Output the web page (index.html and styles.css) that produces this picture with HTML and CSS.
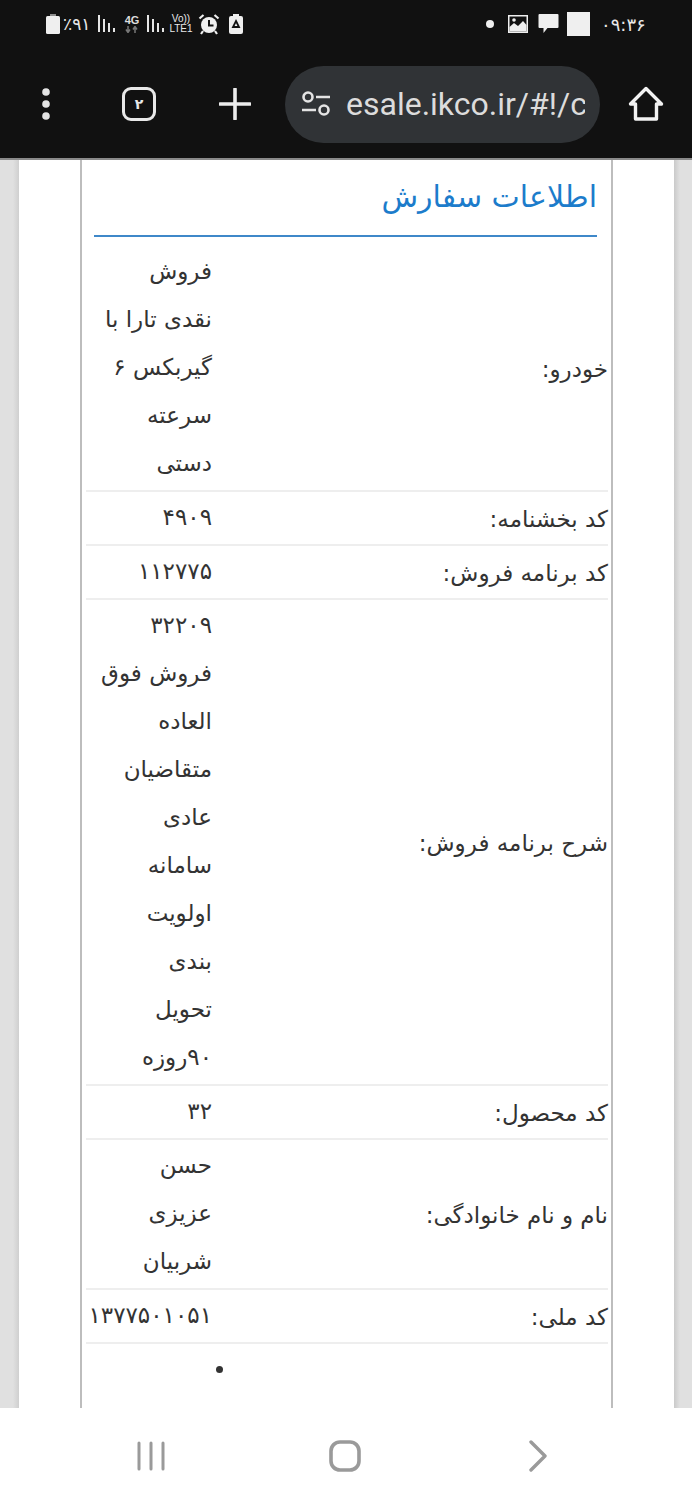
FILE: index.html
```html
<!DOCTYPE html>
<html lang="fa">
<head>
<meta charset="utf-8">
<title>اطلاعات سفارش</title>
<link rel="stylesheet" href="styles.css">
</head>
<body>
<header class="chrome">
  <div class="status" dir="ltr">
    <div class="status-left">
      <svg class="ic-battery" viewBox="0 0 14 20"><rect x="4" y="0" width="6" height="3" fill="#8e8e8e"/><rect x="0" y="2" width="14" height="18" rx="1.5" fill="#efefef"/></svg>
      <span class="pct">٪۹۱</span>
      <svg class="ic-signal" viewBox="0 0 18 20"><g fill="#e6e6e6"><rect x="0" y="1" width="2" height="17"/><rect x="5" y="5" width="2" height="13"/><rect x="10" y="9" width="2" height="9"/><rect x="15" y="14" width="2" height="4"/></g></svg>
      <div class="net">
        <span class="net-top">4G</span>
        <svg viewBox="0 0 14 7"><path d="M3 0v5M1 3.500l2 3 2-3M10 7V2M8 3.500l2-3 2 3" fill="none" stroke="#777" stroke-width="1.500"/></svg>
      </div>
      <svg class="ic-signal second" viewBox="0 0 18 20"><g fill="#e6e6e6"><rect x="0" y="1" width="2" height="17"/><rect x="5" y="5" width="2" height="13"/><rect x="10" y="9" width="2" height="9"/><rect x="15" y="14" width="2" height="4"/></g></svg>
      <div class="volte"><span>Vo))</span><span>LTE1</span></div>
      <svg class="ic-alarm" viewBox="0 0 22 22"><circle cx="11" cy="12" r="8" fill="#efefef"/><path d="M11 7v5.500h4.500" fill="none" stroke="#111" stroke-width="2"/><path d="M1.500 5.500 5.500 2M20.500 5.500 16.500 2M5 18l-2 3M17 18l2 3" stroke="#efefef" stroke-width="2.200"/></svg>
      <svg class="ic-saver" viewBox="0 0 14 20"><rect x="4" y="0" width="6" height="3" fill="#efefef"/><rect x="0" y="2" width="14" height="18" rx="2" fill="#efefef"/><path d="M7 7 10 13H4Z" fill="none" stroke="#111" stroke-width="1.800"/></svg>
    </div>
    <div class="status-right">
      <span class="dot"></span>
      <svg class="ic-image" viewBox="0 0 20 18"><rect width="20" height="18" fill="#efefef"/><rect x="1.500" y="1.500" width="17" height="15" fill="#111"/><path d="M1.500 16.500V12L6 8l4 3 5-5 3.500 4v6.500Z" fill="#efefef"/><circle cx="6" cy="5" r="1.800" fill="#efefef"/></svg>
      <svg class="ic-msg" viewBox="0 0 20 20"><path d="M1 0h18a1 1 0 0 1 1 1v12a1 1 0 0 1-1 1H9l-4 5v-5H1a1 1 0 0 1-1-1V1a1 1 0 0 1 1-1Z" fill="#efefef"/></svg>
      <span class="square"></span>
      <span class="time">۰۹:۳۶</span>
    </div>
  </div>
  <div class="toolbar" dir="ltr">
    <svg class="ic-menu" viewBox="0 0 12 34"><circle cx="6" cy="5" r="3.800"/><circle cx="6" cy="17" r="3.800"/><circle cx="6" cy="29" r="3.800"/></svg>
    <div class="tabs">۲</div>
    <svg class="ic-plus" viewBox="0 0 32 32"><path d="M16 1v30M1 16h30" fill="none" stroke="#ececec" stroke-width="3.600" stroke-linecap="round"/></svg>
    <div class="omnibox">
      <svg class="ic-tune" viewBox="0 0 30 26"><g fill="none" stroke="#e4e4e4" stroke-width="2.600"><circle cx="7" cy="6" r="4.500"/><path d="M15 6h14M1 19h14"/><circle cx="23" cy="19" r="4.500"/></g></svg>
      <span class="url">esale.ikco.ir/#!/c</span>
    </div>
    <svg class="ic-home" viewBox="0 0 36 36"><path d="M2.500 18 18 2.500 33.500 18H28.500V33H7.500V18Z" fill="none" stroke="#f2f2f2" stroke-width="3.400" stroke-linejoin="round"/></svg>
  </div>
</header>

<main class="page" dir="rtl">
  <div class="card">
    <section class="panel">
      <h2 class="panel-title">اطلاعات سفارش</h2>
      <table class="info">
        <colgroup><col class="col-label"><col class="col-value"></colgroup>
        <tbody>
          <tr><th>خودرو:</th><td>فروش<br>نقدی تارا با<br>گیربکس ۶<br>سرعته<br>دستی</td></tr>
          <tr><th>کد بخشنامه:</th><td>۴۹۰۹</td></tr>
          <tr><th>کد برنامه فروش:</th><td>۱۱۲۷۷۵</td></tr>
          <tr><th>شرح برنامه فروش:</th><td>۳۲۲۰۹<br>فروش فوق<br>العاده<br>متقاضیان<br>عادی<br>سامانه<br>اولویت<br>بندی<br>تحویل<br>۹۰روزه</td></tr>
          <tr><th>کد محصول:</th><td>۳۲</td></tr>
          <tr><th>نام و نام خانوادگی:</th><td>حسن<br>عزیزی<br>شربیان</td></tr>
          <tr><th>کد ملی:</th><td>۱۳۷۷۵۰۱۰۵۱</td></tr>
          <tr><th></th><td><ul class="items"><li></li><li class="plain">بالا</li></ul></td></tr>
        </tbody>
      </table>
    </section>
  </div>
</main>

<nav class="navbar" dir="ltr">
  <svg class="ic-recents" viewBox="0 0 28 30"><path d="M2 2v26M14 2v26M26 2v26" fill="none" stroke="#9a9a9a" stroke-width="3" stroke-linecap="round"/></svg>
  <svg class="ic-navhome" viewBox="0 0 32 32"><rect x="2" y="2" width="28" height="28" rx="9" fill="none" stroke="#9a9a9a" stroke-width="3.600"/></svg>
  <svg class="ic-back" viewBox="0 0 20 32"><path d="M3 2 17 16 3 30" fill="none" stroke="#9a9a9a" stroke-width="3.400" stroke-linecap="round" stroke-linejoin="round"/></svg>
</nav>
</body>
</html>
```

FILE: styles.css
```css
* { box-sizing: border-box; }
html, body { margin: 0; height: 1500px; overflow: hidden; }
body {
  display: flex;
  flex-direction: column;
  background: #fff;
  font-family: "DejaVu Sans", "Noto Sans", sans-serif;
  color: #333;
}

/* phone + browser chrome */
.chrome { flex: 0 0 160px; height: 160px; background: #111; border-bottom: 2px solid #8a8a8a; }
.status { height: 50px; display: flex; justify-content: space-between; align-items: flex-start; padding: 12px 46px 0 46px; color: #e8e8e8; }
.status-left, .status-right { display: flex; align-items: center; height: 24px; }
.ic-battery { width: 14px; height: 20px; }
.pct { font-size: 17px; margin-left: 3px; width: 30px; white-space: nowrap; }
.ic-signal { width: 18px; height: 20px; margin-left: 5px; }
.ic-signal.second { margin-left: 7px; }
.net { width: 16px; margin-left: 8px; display: flex; flex-direction: column; align-items: center; }
.net-top { font: 700 11px/11px "Liberation Sans", sans-serif; color: #ddd; }
.net svg { width: 14px; height: 7px; }
.volte { width: 24px; margin-left: 4px; display: flex; flex-direction: column; align-items: center; font: 400 10px/10px "Liberation Sans", sans-serif; color: #e8e8e8; }
.ic-alarm { width: 22px; height: 22px; margin-left: 5px; }
.ic-saver { width: 14px; height: 20px; margin-left: 9px; }
.dot { width: 8px; height: 8px; border-radius: 50%; background: #efefef; margin-right: 14px; }
.ic-image { width: 20px; height: 18px; margin-right: 10px; }
.ic-msg { width: 21px; height: 20px; margin-right: 8px; }
.square { width: 23px; height: 24px; background: #efefef; margin-right: 11px; }
.time { font-size: 18px; width: 45px; white-space: nowrap; }

.toolbar { height: 108px; display: flex; align-items: center; padding: 0 0 0 40px; }
.ic-menu { width: 12px; height: 34px; fill: #e4e4e4; }
.tabs {
  width: 34px; height: 34px; margin-left: 70px;
  border: 3px solid #e8e8e8; border-radius: 9px;
  display: flex; align-items: center; justify-content: center;
  font-size: 14px; font-weight: 700; color: #e8e8e8;
}
.ic-plus { width: 32px; height: 32px; margin-left: 63px; }
.omnibox {
  width: 315px; height: 77px; margin-left: 34px;
  border-radius: 39px; background: #303336;
  display: flex; align-items: center; padding: 0 15px 0 16px;
}
.ic-tune { width: 30px; height: 26px; flex: none; }
.url {
  margin-left: 15px; flex: 1; overflow: hidden; white-space: nowrap;
  font: 400 32px/40px Roboto, sans-serif; color: #dcdcdc;
}
.ic-home { width: 36px; height: 36px; margin-left: 28px; }

/* page */
.page {
  flex: 1; min-height: 0; overflow: hidden; padding: 0 18px 0 19px;
  background: linear-gradient(90deg, #e0e0e0 0 13px, #cfcfcf 19px, #cacaca 674px, #e0e0e0 680px);
}
.card { height: 100%; background: #fff; padding: 0 61px; }
.panel { height: 100%; border: solid #bdbdbd; border-width: 0 2px; padding: 0 3px 0 4px; }
.panel-title {
  margin: 0 11px 9px 8px; height: 77px; padding-top: 17px;
  border-bottom: 2px solid #3f88c9;
  font-size: 30px; line-height: 40px; font-weight: 400; color: #1c7ccb;
}
.info { width: 100%; table-layout: fixed; border-collapse: collapse; font-size: 23px; }
.col-value { width: 132px; }
.info th, .info td { border-bottom: 2px solid #eee; line-height: 48px; font-weight: 400; text-align: right; }
.info th { vertical-align: middle; padding: 3px 0 1px; white-space: nowrap; }
.info td { vertical-align: top; padding: 1px 6px 3px 0; white-space: nowrap; }
.items { list-style: disc; margin: 0; padding: 0 10px 0 0; }
.items li { height: 48px; }
.items li.plain { list-style: none; margin-right: -10px; }
.info tr:last-child th, .info tr:last-child td { border-bottom: 0; }

/* android nav */
.navbar { flex: 0 0 92px; height: 92px; background: #fff; position: relative; z-index: 1; display: flex; align-items: center; padding: 4px 0 0 137px; }
.ic-recents { width: 28px; height: 30px; }
.ic-navhome { width: 32px; height: 32px; margin-left: 164px; }
.ic-back { width: 20px; height: 32px; margin-left: 167px; }
```
